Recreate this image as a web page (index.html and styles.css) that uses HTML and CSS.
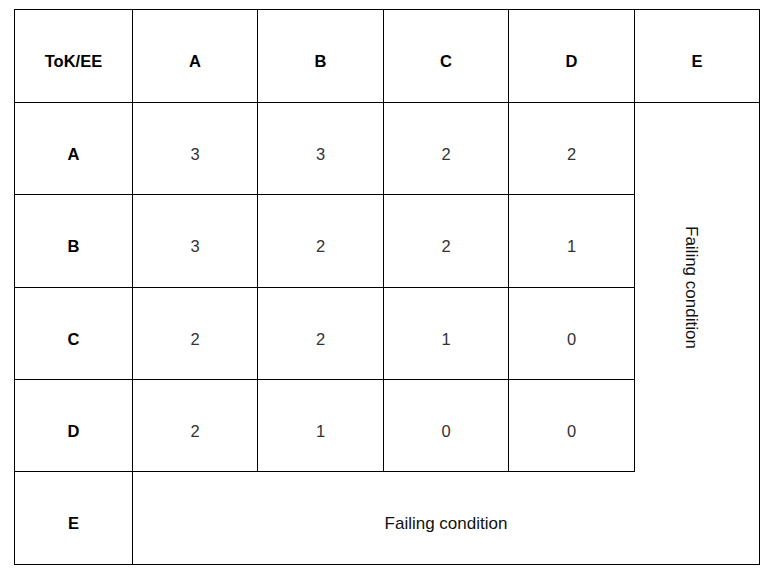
FILE: index.html
```html
<!DOCTYPE html>
<html>
<head>
<meta charset="utf-8">
<link rel="stylesheet" href="styles.css">
</head>
<body>
<div class="grid">
  <div class="cell head">ToK/EE</div>
  <div class="cell head">A</div>
  <div class="cell head">B</div>
  <div class="cell head">C</div>
  <div class="cell head">D</div>
  <div class="cell head">E</div>

  <div class="cell head">A</div>
  <div class="cell">3</div>
  <div class="cell">3</div>
  <div class="cell">2</div>
  <div class="cell">2</div>
  <div class="cell vfail"><span class="vtext">Failing condition</span></div>

  <div class="cell head">B</div>
  <div class="cell">3</div>
  <div class="cell">2</div>
  <div class="cell">2</div>
  <div class="cell">1</div>

  <div class="cell head">C</div>
  <div class="cell">2</div>
  <div class="cell">2</div>
  <div class="cell">1</div>
  <div class="cell">0</div>

  <div class="cell head">D</div>
  <div class="cell">2</div>
  <div class="cell">1</div>
  <div class="cell">0</div>
  <div class="cell">0</div>

  <div class="cell head">E</div>
  <div class="cell hfail">Failing condition</div>
</div>
</body>
</html>
```
FILE: styles.css
```css
html, body {
  margin: 0;
  padding: 0;
  background: #ffffff;
}
body {
  padding: 9px 0 0 14px;
  font-family: "Liberation Sans", Arial, sans-serif;
}
.grid {
  display: grid;
  grid-template-columns: 118px 125px 126px 125px 126px 125px;
  grid-template-rows: 93px 92px 93px 92px 92px 93px;
  width: max-content;
  border-left: 1px solid #000;
  border-top: 1px solid #000;
}
.cell {
  box-sizing: border-box;
  border-right: 1px solid #000;
  border-bottom: 1px solid #000;
  display: flex;
  align-items: center;
  justify-content: center;
  padding-top: 11px;
  font-size: 16.5px;
  color: #333;
}
.head {
  font-weight: bold;
  color: #000;
}
.vfail {
  grid-column: 6;
  grid-row: 2 / 6;
  border-bottom: none;
  padding-top: 0;
  padding-right: 12px;
  font-size: 17px;
  color: #111;
}
.vtext {
  writing-mode: vertical-rl;
}
.hfail {
  grid-column: 2 / 7;
  font-size: 17px;
  color: #111;
}
```
